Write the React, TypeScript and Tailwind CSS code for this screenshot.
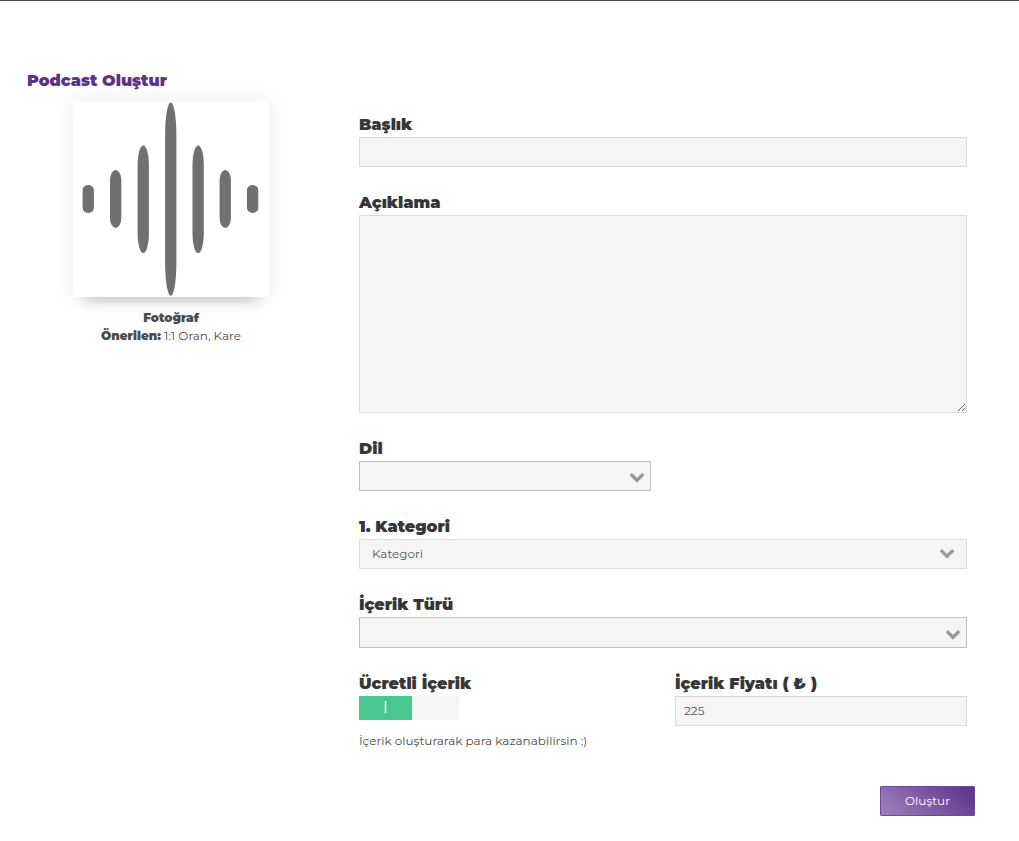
import { useState } from "react";
import type { ReactNode } from "react";

const BARS = [
  { x: 9.6, y: 84, height: 28, ry: 5 },
  { x: 37, y: 69, height: 58, ry: 10 },
  { x: 64.6, y: 44.5, height: 107.5, ry: 19 },
  { x: 92.1, y: 1.3, height: 193.5, ry: 33 },
  { x: 119.5, y: 44.5, height: 107.5, ry: 19 },
  { x: 146.6, y: 69, height: 58, ry: 10 },
  { x: 174, y: 84, height: 28, ry: 5 },
];

const inputClass =
  "block w-full rounded-none border border-[#dbdbdb] bg-[#f5f5f5] px-2 text-xs text-[#555555] outline-none";

const Waveform = () => (
  <svg viewBox="0 0 196 196" className="block h-full w-full" aria-hidden="true">
    {BARS.map((bar) => (
      <rect
        key={bar.x}
        x={bar.x}
        y={bar.y}
        width="11.3"
        height={bar.height}
        rx="5.65"
        ry={bar.ry}
        fill="#707070"
      />
    ))}
  </svg>
);

interface FieldProps {
  id: string;
  label: string;
  children: ReactNode;
}

const Field = ({ id, label, children }: FieldProps) => (
  <div>
    <label
      htmlFor={id}
      className="block text-base leading-6 font-black text-[#363636]"
    >
      {label}
    </label>
    {children}
  </div>
);

interface SelectBoxProps {
  id: string;
  className: string;
  chevronClass: string;
  options: string[];
}

const SelectBox = ({
  id,
  className,
  chevronClass,
  options,
}: SelectBoxProps) => (
  <div className="grid items-center">
    <select
      id={id}
      className={`col-start-1 row-start-1 w-full appearance-none rounded-none border bg-[#f5f5f5] px-3 text-xs text-[#555555] outline-none ${className}`}
    >
      {options.map((option) => (
        <option key={option}>{option}</option>
      ))}
    </select>
    <svg
      viewBox="0 0 14 10"
      className={`pointer-events-none col-start-1 row-start-1 h-[10px] w-[14px] justify-self-end ${chevronClass}`}
      aria-hidden="true"
    >
      <path
        d="M1.8 2.1 L7 7.3 L12.2 2.1"
        fill="none"
        stroke="#999999"
        strokeWidth="3.4"
        strokeLinecap="round"
      />
    </svg>
  </div>
);

function App() {
  const [isPaid, setIsPaid] = useState(true);
  const [price, setPrice] = useState("225");

  return (
    <main className="min-h-screen border-t border-[#4a4a4a] bg-white pt-[68px] pr-11 pb-6 pl-[27px] font-['Montserrat','Inter',sans-serif] text-[#4a4a4a]">
      <h1 className="text-base leading-6 font-black text-[#5c3389]">
        Podcast Oluştur
      </h1>

      <div className="flex gap-9">
        <aside className="flex w-72 shrink-0 flex-col items-center pt-2 text-xs leading-[18px]">
          <button
            type="button"
            aria-label="Fotoğraf seç"
            className="size-[196px] bg-white shadow-[0_14px_14px_-12px_rgba(0,0,0,0.25),0_0_20px_rgba(0,0,0,0.08)]"
          >
            <Waveform />
          </button>
          <p className="mt-3 font-black">Fotoğraf</p>
          <p>
            <strong className="font-black">Önerilen:</strong> 1:1 Oran, Kare
          </p>
        </aside>

        <form
          className="min-w-0 flex-1 pt-5"
          onSubmit={(e) => e.preventDefault()}
        >
          <div className="space-y-6 px-2">
            <Field id="title" label="Başlık">
              <input id="title" type="text" className={`${inputClass} h-[30px]`} />
            </Field>

            <Field id="description" label="Açıklama">
              <textarea
                id="description"
                className={`${inputClass} h-[198px] resize py-2`}
              />
            </Field>

            <div className="grid grid-cols-2 gap-6">
              <Field id="language" label="Dil">
                <SelectBox
                  id="language"
                  className="h-[30px] border-[#c1c1c1]"
                  chevronClass="mt-1 mr-[7px]"
                  options={[""]}
                />
              </Field>
            </div>

            <Field id="category" label="1. Kategori">
              <SelectBox
                id="category"
                className="h-[30px] border-[#dbdbdb]"
                chevronClass="mr-[13px]"
                options={["Kategori"]}
              />
            </Field>

            <Field id="type" label="İçerik Türü">
              <SelectBox
                id="type"
                className="h-[31px] border-[#c1c1c1]"
                chevronClass="mt-1 mr-[7px]"
                options={[""]}
              />
            </Field>

            <div className="grid grid-cols-2 gap-6">
              <Field id="paid" label="Ücretli İçerik">
                <div className="grid h-6 w-[100px] bg-[#f5f5f5]">
                  <span
                    className={`pointer-events-none col-start-1 row-start-1 flex w-[53px] items-center justify-center text-base text-white ${
                      isPaid
                        ? "bg-[#48c78e]"
                        : "justify-self-end bg-[#b5b5b5]"
                    }`}
                  >
                    {isPaid ? "I" : "O"}
                  </span>
                  <input
                    id="paid"
                    type="checkbox"
                    role="switch"
                    checked={isPaid}
                    onChange={(e) => setIsPaid(e.target.checked)}
                    className="col-start-1 row-start-1 cursor-pointer appearance-none"
                  />
                </div>
                <p className="mt-3 text-xs leading-[18px] whitespace-nowrap">
                  İçerik oluşturarak para kazanabilirsin :)
                </p>
              </Field>

              <Field id="price" label="İçerik Fiyatı ( ₺ )">
                <input
                  id="price"
                  type="text"
                  inputMode="numeric"
                  value={price}
                  onChange={(e) => setPrice(e.target.value)}
                  className={`${inputClass} h-[30px] pb-0.5`}
                />
              </Field>
            </div>
          </div>

          <div className="mt-9 flex justify-end">
            <button
              type="submit"
              className="h-[30px] w-[95px] rounded-[1px] border border-[#6f479b] bg-linear-[45deg,#9f80bf,#5c3389] text-xs text-white"
            >
              Oluştur
            </button>
          </div>
        </form>
      </div>
    </main>
  );
}

export default App;
